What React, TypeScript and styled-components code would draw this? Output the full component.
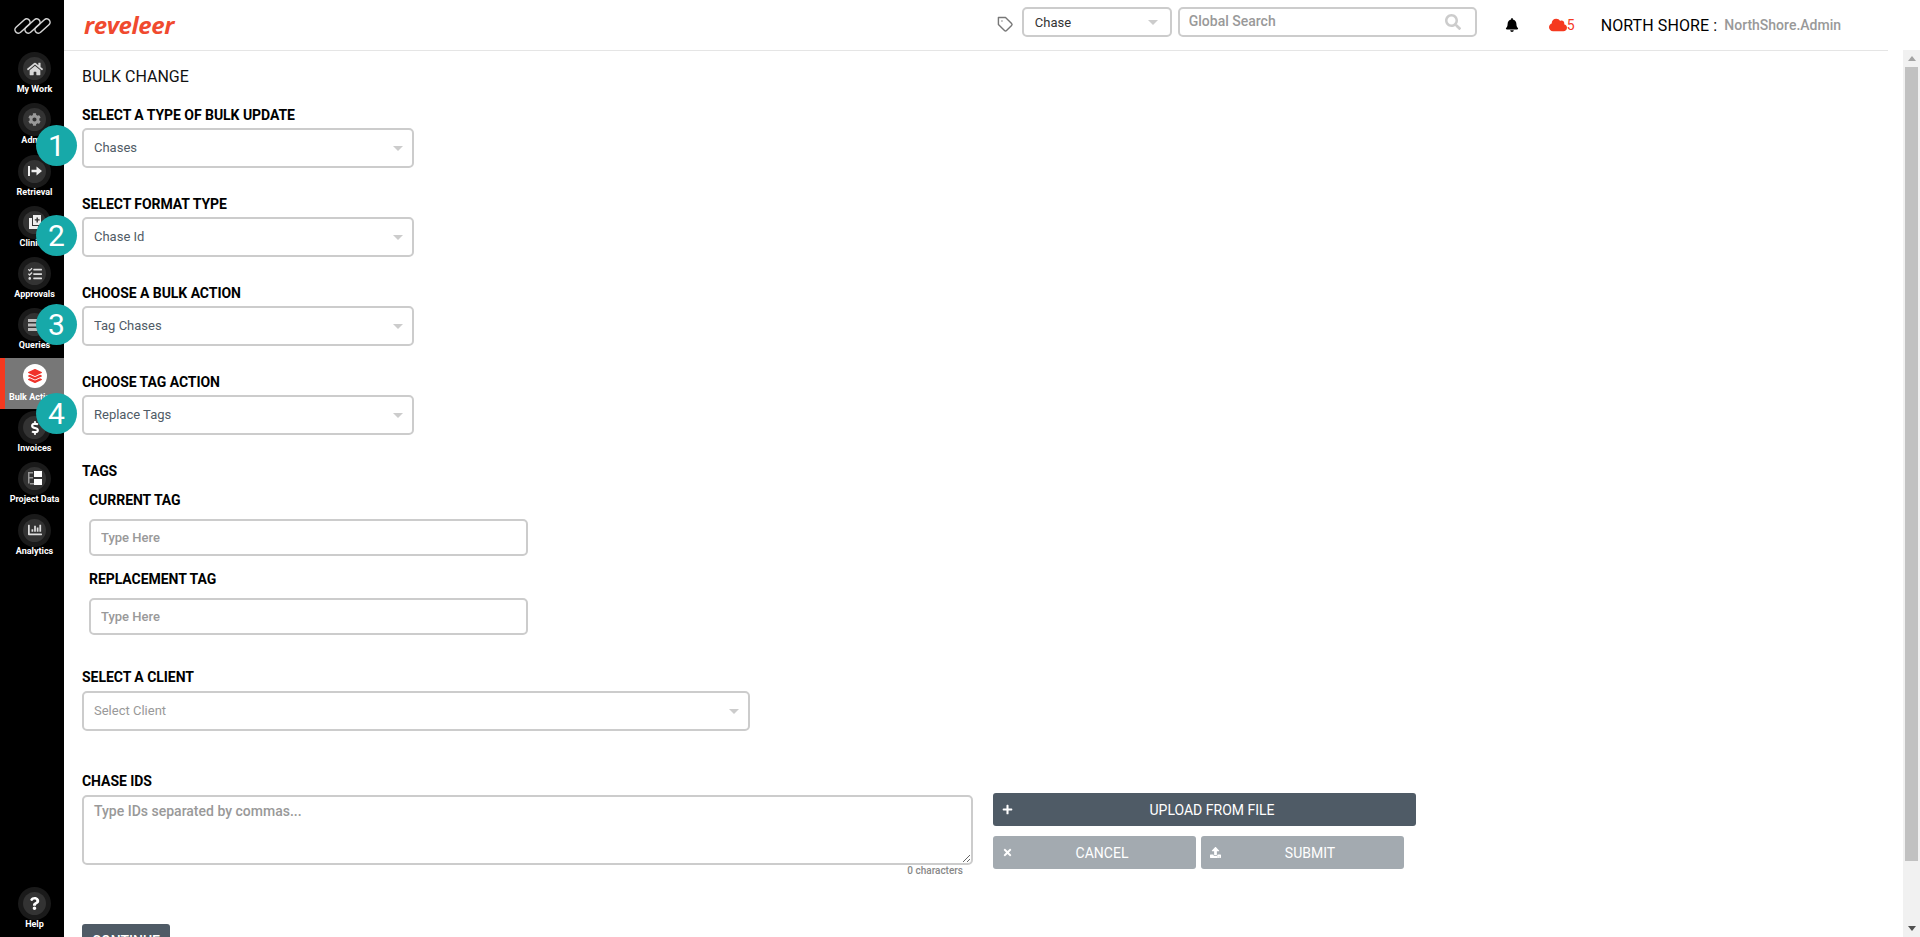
import { ReactNode } from 'react'
import styled, { createGlobalStyle } from 'styled-components'
import {
    FaBell, FaChartBar, FaCloud, FaCog, FaDollarSign, FaHome, FaLayerGroup, FaPlus,
    FaQuestion, FaSearch, FaTasks, FaTimes, FaUpload,
} from 'react-icons/fa'
import { FiTag } from 'react-icons/fi'

const GlobalStyle = createGlobalStyle`
    html, body {
        margin: 0;
        height: 100%;
        overflow: hidden;
        font-family: 'Roboto', sans-serif;
        background: #fff;
    }
    * { box-sizing: border-box; }
`

const RetrievalIcon = () => (
    <svg width="14" height="12" viewBox="0 0 14 12" fill="#eee">
        <path d="M0 1h2v10H0z" />
        <path d="M3.500 4.700h5V1.500L14 6l-5.500 4.500V7.300h-5z" />
    </svg>
)

const ClinicalIcon = () => (
    <svg width="14" height="15" viewBox="0 0 14 15" fill="#eee">
        <path d="M1 3h3v8h6v3H1z" />
        <path d="M5 0h8v10H5z" />
        <path d="M8.500 2.500h1.400V4.300h1.700v1.300H9.900v1.800H8.500V5.600H6.800V4.300h1.700z" fill="#333" />
    </svg>
)

const QueriesIcon = () => (
    <svg width="14" height="12" viewBox="0 0 14 12" fill="#bbb">
        <path d="M0 0h14v3H0zM0 4.500h14v3H0zM0 9h14v3H0z" />
    </svg>
)

const ProjectIcon = () => (
    <svg width="16" height="15" viewBox="0 0 16 15">
        <path d="M1 1h5v1.500H2.500V6H6v1.500H2.500v5H1z" fill="#999" />
        <path d="M7 0h8v6H7z" fill="#fff" />
        <path d="M7 8h8v6H7z" fill="#fff" />
        <path d="M3 12h4v1.500H3z" fill="#999" />
    </svg>
)

const MarkLogo = () => (
    <svg width="37" height="18" viewBox="0 0 37 18" fill="none" stroke="#d4d4d4" strokeWidth="1.5">
        <rect x="-9" y="-3.400" width="18" height="6.800" rx="3.400" transform="translate(8.500 9) rotate(-42)" />
        <rect x="-9" y="-3.400" width="18" height="6.800" rx="3.400" transform="translate(18.500 9) rotate(-42)" />
        <rect x="-9" y="-3.400" width="18" height="6.800" rx="3.400" transform="translate(28.500 9) rotate(-42)" />
    </svg>
)

interface INavItem {
    label: string
    icon: ReactNode
    active?: boolean
}

const navItems: INavItem[] = [
    { label: 'My Work', icon: <FaHome size={16} color="#d8d8d8" /> },
    { label: 'Admin', icon: <FaCog size={13} color="#999" /> },
    { label: 'Retrieval', icon: <RetrievalIcon /> },
    { label: 'Clinical', icon: <ClinicalIcon /> },
    { label: 'Approvals', icon: <FaTasks size={14} color="#ddd" /> },
    { label: 'Queries', icon: <QueriesIcon /> },
    { label: 'Bulk Actions', icon: <FaLayerGroup size={14} color="#f0322a" />, active: true },
    { label: 'Invoices', icon: <FaDollarSign size={14} color="#fff" /> },
    { label: 'Project Data', icon: <ProjectIcon /> },
    { label: 'Analytics', icon: <FaChartBar size={14} color="#ddd" /> },
]

const bulkFields = [
    { label: 'SELECT A TYPE OF BULK UPDATE', value: 'Chases' },
    { label: 'SELECT FORMAT TYPE', value: 'Chase Id' },
    { label: 'CHOOSE A BULK ACTION', value: 'Tag Chases' },
    { label: 'CHOOSE TAG ACTION', value: 'Replace Tags' },
]

const annotations = [
    { step: 1, top: 125 },
    { step: 2, top: 215 },
    { step: 3, top: 304 },
    { step: 4, top: 393 },
]

const Dropdown = ({ value, placeholder }: { value?: string, placeholder?: boolean }) => (
    <SelectWrap>
        <NativeSelect $placeholder={placeholder} defaultValue={value}>
            <option>{value}</option>
        </NativeSelect>
        <Caret />
    </SelectWrap>
)

export default function App() {
    return (
        <Page>
            <GlobalStyle />
            <Sidebar>
                <SidebarLogo><MarkLogo /></SidebarLogo>
                {navItems.map((item) => (
                    <NavItem key={item.label} $active={item.active}>
                        <NavCircle $active={item.active}>{item.icon}</NavCircle>
                        <NavLabel>{item.label}</NavLabel>
                    </NavItem>
                ))}
                <HelpItem>
                    <NavCircle><FaQuestion size={13} color="#fff" /></NavCircle>
                    <NavLabel>Help</NavLabel>
                </HelpItem>
            </Sidebar>
            <Column>
                <Header>
                    <Wordmark>reveleer</Wordmark>
                    <TagIcon><FiTag size={17} color="#777" /></TagIcon>
                    <HeaderSelect>
                        <HeaderSelectValue>Chase</HeaderSelectValue>
                        <SmallCaret />
                    </HeaderSelect>
                    <SearchBox>
                        <SearchInput placeholder="Global Search" />
                        <FaSearch size={16} color="#ccc" />
                    </SearchBox>
                    <BellWrap><FaBell size={14} color="#000" /></BellWrap>
                    <CloudWrap>
                        <FaCloud size={18} color="#f5391f" />
                        <CloudCount>5</CloudCount>
                    </CloudWrap>
                    <OrgName>NORTH SHORE :</OrgName>
                    <UserName>NorthShore.Admin</UserName>
                </Header>
                <Body>
                    <Scroller>
                        <Content>
                            <Heading>BULK CHANGE</Heading>
                            {bulkFields.map((field) => (
                                <Field key={field.label}>
                                    <Label>{field.label}</Label>
                                    <Dropdown value={field.value} />
                                </Field>
                            ))}
                            <TagsSection>
                                <Label>TAGS</Label>
                                <TagsGroup>
                                    <TagField>
                                        <Label>CURRENT TAG</Label>
                                        <TextInput placeholder="Type Here" />
                                    </TagField>
                                    <TagField>
                                        <Label>REPLACEMENT TAG</Label>
                                        <TextInput placeholder="Type Here" />
                                    </TagField>
                                </TagsGroup>
                            </TagsSection>
                            <ClientField>
                                <Label>SELECT A CLIENT</Label>
                                <Dropdown value="Select Client" placeholder />
                            </ClientField>
                            <IdsSection>
                                <Label>CHASE IDS</Label>
                                <IdsRow>
                                    <IdsColumn>
                                        <IdsInput placeholder="Type IDs separated by commas..." />
                                        <CharCount>0 characters</CharCount>
                                    </IdsColumn>
                                    <Actions>
                                        <ActionButton $wide>
                                            <ButtonIcon><FaPlus size={11} /></ButtonIcon>
                                            UPLOAD FROM FILE
                                        </ActionButton>
                                        <ActionButton $muted>
                                            <ButtonIcon><FaTimes size={11} /></ButtonIcon>
                                            CANCEL
                                        </ActionButton>
                                        <ActionButton $muted>
                                            <ButtonIcon><FaUpload size={11} /></ButtonIcon>
                                            SUBMIT
                                        </ActionButton>
                                    </Actions>
                                </IdsRow>
                            </IdsSection>
                            <ContinueButton>CONTINUE</ContinueButton>
                        </Content>
                    </Scroller>
                    <ScrollRail>
                        <RailArrow><ArrowUp /></RailArrow>
                        <RailThumb />
                        <RailArrow><ArrowDown /></RailArrow>
                    </ScrollRail>
                </Body>
            </Column>
            {annotations.map((a) => (
                <Annotation key={a.step} $top={a.top}>{a.step}</Annotation>
            ))}
        </Page>
    )
}

const Page = styled.div`
    position: relative;
    display: flex;
    width: 100%;
    height: 100vh;
    overflow: hidden;
`

const Sidebar = styled.nav`
    display: flex;
    flex-direction: column;
    flex: 0 0 64px;
    width: 64px;
    background: #000;
`

const SidebarLogo = styled.div`
    display: flex;
    justify-content: center;
    align-items: center;
    height: 50px;
    padding: 2px 0 0 0;
`

const NavItem = styled.div<{ $active?: boolean }>`
    display: flex;
    flex-direction: column;
    align-items: center;
    height: 51.3px;
    padding: ${(p) => (p.$active ? '6px 0 0' : '2px 0 0 5px')};
    background: ${(p) => (p.$active ? '#777' : 'transparent')};
    border-left: ${(p) => (p.$active ? '5px solid #f5391f' : '0')};
`

const HelpItem = styled(NavItem)`
    margin-top: auto;
    height: 52px;
`

const NavCircle = styled.div<{ $active?: boolean }>`
    display: flex;
    justify-content: center;
    align-items: center;
    width: ${(p) => (p.$active ? '24px' : '23px')};
    height: ${(p) => (p.$active ? '24px' : '23px')};
    margin-top: ${(p) => (p.$active ? '0' : '5px')};
    border-radius: 50%;
    background: ${(p) => (p.$active ? '#fff' : '#333')};
    box-shadow: ${(p) => (p.$active ? 'none' : '0 0 0 5px #1a1a1a')};
`

const NavLabel = styled.span`
    margin-top: 3px;
    font-size: 9px;
    line-height: 12px;
    font-weight: 700;
    color: #fff;
    white-space: nowrap;
`

const Column = styled.div`
    display: flex;
    flex-direction: column;
    flex: 1;
    min-width: 0;
`

const Header = styled.header`
    display: flex;
    align-items: center;
    flex: 0 0 50px;
    padding: 0 79px 0 20px;
`

const Wordmark = styled.div`
    margin-right: auto;
    font-family: 'Open Sans', sans-serif;
    font-size: 24px;
    font-style: italic;
    font-weight: 700;
    line-height: 30px;
    letter-spacing: -0.4px;
    color: #f04a2f;
`

const TagIcon = styled.span`
    display: flex;
    margin: 0 8px 2px 0;
`

const HeaderSelect = styled.div`
    display: flex;
    justify-content: space-between;
    align-items: center;
    width: 150px;
    height: 30px;
    margin-bottom: 6px;
    padding: 0 12px 0 11px;
    border: 2px solid #ccc;
    border-radius: 5px;
`

const HeaderSelectValue = styled.span`
    font-size: 13px;
    color: #333;
`

const SmallCaret = styled.span`
    border-left: 5px solid transparent;
    border-right: 5px solid transparent;
    border-top: 5px solid #ccc;
`

const SearchBox = styled.div`
    display: flex;
    align-items: center;
    justify-content: space-between;
    width: 299px;
    height: 30px;
    margin: 0 0 6px 6px;
    padding: 0 14px 0 9px;
    border: 2px solid #ccc;
    border-radius: 5px;
`

const SearchInput = styled.input`
    flex: 1;
    border: 0;
    outline: 0;
    padding: 0 0 3px;
    font-family: 'Roboto', sans-serif;
    font-size: 14px;
    font-weight: 500;
    &::placeholder { color: #999; opacity: 1; }
`

const BellWrap = styled.span`
    display: flex;
    margin-left: 28px;
`

const CloudWrap = styled.span`
    display: flex;
    align-items: center;
    margin-left: 30px;
`

const CloudCount = styled.span`
    font-size: 14px;
    color: #f5391f;
`

const OrgName = styled.span`
    margin-left: 26px;
    font-size: 16px;
    letter-spacing: 0.1px;
    color: #000;
`

const UserName = styled.span`
    margin-left: 7px;
    font-size: 14px;
    font-weight: 500;
    color: #999;
`

const Body = styled.div`
    display: flex;
    flex: 1;
    min-height: 0;
`

const Scroller = styled.main`
    flex: 1;
    min-width: 0;
    overflow: hidden;
`

const ScrollRail = styled.div`
    display: flex;
    flex-direction: column;
    flex: 0 0 17px;
    background: #f1f1f1;
`

const RailArrow = styled.div`
    display: flex;
    justify-content: center;
    align-items: center;
    flex: 0 0 17px;
`

const ArrowUp = styled.span`
    border-left: 4px solid transparent;
    border-right: 4px solid transparent;
    border-bottom: 5px solid #a3a3a3;
`

const ArrowDown = styled.span`
    border-left: 4px solid transparent;
    border-right: 4px solid transparent;
    border-top: 5px solid #505050;
`

const RailThumb = styled.div`
    flex: 0 0 794px;
    margin: 0 2px auto;
    background: #c1c1c1;
`

const Content = styled.div`
    margin-right: 15px;
    padding: 16px 0 46px 18px;
    border-top: 1px solid #e5e5e5;
`

const Heading = styled.h1`
    margin: 0 0 20px;
    font-size: 16px;
    font-weight: 400;
    line-height: 20px;
    color: #111;
`

const Label = styled.label`
    display: block;
    font-size: 14px;
    font-weight: 700;
    line-height: 16px;
    letter-spacing: -0.05px;
    color: #000;
`

const Field = styled.div`
    width: 332px;
    margin-bottom: 28px;
    & > ${Label} { margin-bottom: 5px; }
`

const SelectWrap = styled.div`
    position: relative;
`

const NativeSelect = styled.select<{ $placeholder?: boolean }>`
    appearance: none;
    display: block;
    width: 100%;
    height: 40px;
    padding: 0 30px 2px 10px;
    background: #fff;
    border: 2px solid #ccc;
    border-radius: 5px;
    font-family: 'Roboto', sans-serif;
    font-size: 13px;
    color: ${(p) => (p.$placeholder ? '#999' : '#4f5b66')};
`

const Caret = styled.span`
    position: absolute;
    top: 18px;
    right: 11px;
    border-left: 5px solid transparent;
    border-right: 5px solid transparent;
    border-top: 5px solid #ccc;
    pointer-events: none;
`

const TagsSection = styled.section`
    margin-top: 28px;
`

const TagsGroup = styled.div`
    display: flex;
    flex-direction: column;
    gap: 15px;
    width: 439px;
    margin: 13px 0 0 7px;
`

const TagField = styled.div`
    & > ${Label} { margin-bottom: 11px; }
`

const TextInput = styled.input`
    display: block;
    width: 100%;
    height: 37px;
    padding: 0 10px;
    border: 2px solid #ccc;
    border-radius: 5px;
    outline: 0;
    font-family: 'Roboto', sans-serif;
    font-size: 13px;
    font-weight: 500;
    &::placeholder { color: #999; opacity: 1; }
`

const ClientField = styled.div`
    width: 668px;
    margin-top: 34px;
    & > ${Label} { margin-bottom: 6px; }
`

const IdsSection = styled.section`
    margin-top: 42px;
`

const IdsRow = styled.div`
    display: flex;
    gap: 20px;
    align-items: flex-start;
    margin-top: 4px;
`

const IdsColumn = styled.div`
    display: flex;
    flex-direction: column;
    align-items: flex-end;
    width: 891px;
    padding-top: 2px;
`

const IdsInput = styled.textarea`
    display: block;
    width: 100%;
    height: 70px;
    padding: 6px 10px;
    border: 2px solid #ccc;
    border-radius: 5px;
    outline: 0;
    font-family: 'Roboto', sans-serif;
    font-size: 14px;
    font-weight: 500;
    resize: vertical;
    &::placeholder { color: #999; opacity: 1; }
`

const CharCount = styled.span`
    margin-right: 10px;
    font-size: 10px;
    font-weight: 500;
    line-height: 11px;
    color: #888;
`

const Actions = styled.div`
    display: grid;
    grid-template-columns: 203px 203px 7px;
    column-gap: 5px;
    row-gap: 10px;
    width: 423px;
`

const ActionButton = styled.button<{ $wide?: boolean, $muted?: boolean }>`
    position: relative;
    grid-column: ${(p) => (p.$wide ? '1 / -1' : 'auto')};
    height: 33px;
    padding: 0 0 0 15px;
    border: 0;
    border-radius: 3px;
    background: ${(p) => (p.$muted ? '#a3aab0' : '#4f5b66')};
    color: #fff;
    font-family: 'Roboto', sans-serif;
    font-size: 14px;
    text-align: center;
`

const ButtonIcon = styled.span`
    position: absolute;
    left: 9px;
    top: 11px;
    display: flex;
`

const ContinueButton = styled.button`
    display: block;
    width: 88px;
    height: 33px;
    margin-top: 48px;
    border: 0;
    border-radius: 3px;
    background: #4f5b66;
    color: #fff;
    font-family: 'Roboto', sans-serif;
    font-size: 14px;
    font-weight: 500;
`

const Annotation = styled.div<{ $top: number }>`
    position: absolute;
    left: 36px;
    top: ${(p) => p.$top}px;
    display: flex;
    justify-content: center;
    align-items: center;
    width: 41px;
    height: 41px;
    border-radius: 50%;
    background: #17a9a9;
    color: #fff;
    font-size: 30px;
    font-weight: 400;
`
